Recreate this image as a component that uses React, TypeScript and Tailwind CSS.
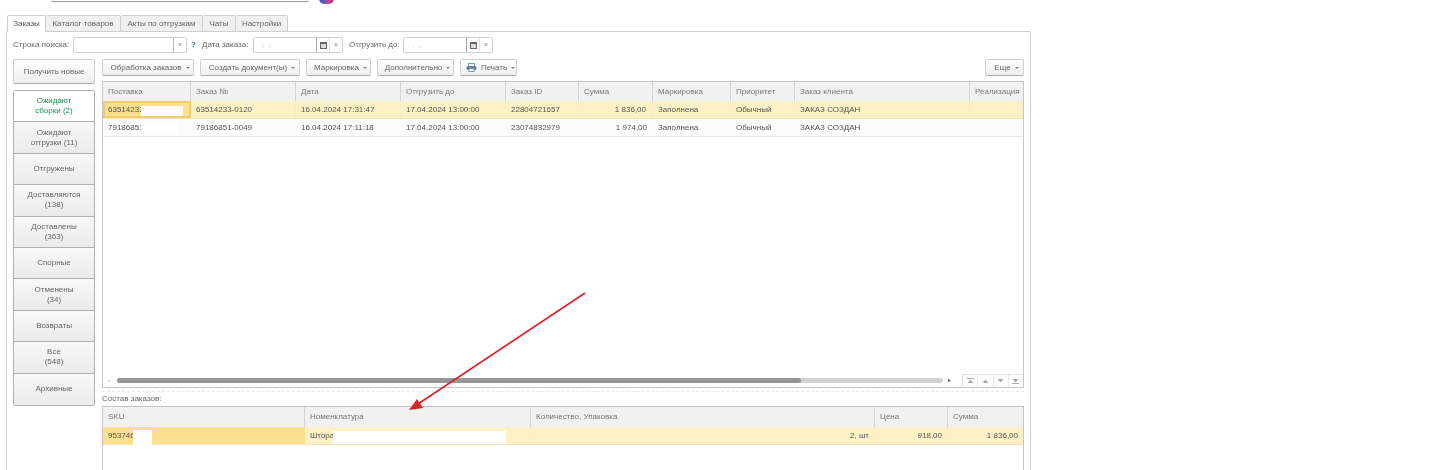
import { FC, ReactNode } from 'react'

const tabs = [
  { name: 'Заказы', w: 'w-[39px]', active: true },
  { name: 'Каталог товаров', w: 'w-[75px]' },
  { name: 'Акты по отгрузкам', w: 'w-[82px]' },
  { name: 'Чаты', w: 'w-[33px]' },
  { name: 'Настройки', w: 'w-[52px]' },
]

const sideItems = [
  ['Ожидают', 'сборки (2)'],
  ['Ожидают', 'отгрузки (11)'],
  ['Отгружены'],
  ['Доставляются', '(138)'],
  ['Доставлены', '(363)'],
  ['Спорные'],
  ['Отменены', '(34)'],
  ['Возвраты'],
  ['Все', '(548)'],
  ['Архивные'],
]

const orderCols = [
  { name: 'Поставка', w: 'w-[88px]' },
  { name: 'Заказ №', w: 'w-[105px]' },
  { name: 'Дата', w: 'w-[105px]' },
  { name: 'Отгрузить до', w: 'w-[105px]' },
  { name: 'Заказ ID', w: 'w-[73px]' },
  { name: 'Сумма', w: 'w-[74px]', right: true },
  { name: 'Маркировка', w: 'w-[78px]' },
  { name: 'Приоритет', w: 'w-[64px]' },
  { name: 'Заказ клиента', w: 'w-[175px]' },
  { name: 'Реализация', w: 'flex-1' },
]

const orders = [
  ['63514233', '63514233-0120', '16.04.2024 17:31:47', '17.04.2024 13:00:00', '22804721657', '1 836,00', 'Заполнена', 'Обычный', 'ЗАКАЗ СОЗДАН', ''],
  ['79186851', '79186851-0049', '16.04.2024 17:11:18', '17.04.2024 13:00:00', '23074832979', '1 974,00', 'Заполнена', 'Обычный', 'ЗАКАЗ СОЗДАН', ''],
]

const itemCols = [
  { name: 'SKU', w: 'w-[202px]' },
  { name: 'Номенклатура', w: 'w-[226px]' },
  { name: 'Количество, Упаковка', w: 'w-[344px]' },
  { name: 'Цена', w: 'w-[73px]' },
  { name: 'Сумма', w: 'flex-1' },
]

const Caret = () => (
  <span className="ml-[4px] mb-[-1px] inline-block border-x-[2px] border-t-[2px] border-x-transparent border-t-[#888]" />
)

const ToolButton: FC<{ w: string; children: ReactNode }> = ({ w, children }) => (
  <div className={`${w} flex h-[17px] items-center justify-center rounded-[2px] border border-[#cfcfcf] border-b-[#acacac] bg-gradient-to-b from-white to-[#eeeeee] pl-[4px] text-[8px] text-[#666]`}>
    {children}
    <Caret />
  </div>
)

const ClearBtn: FC<{ w?: string }> = ({ w = 'w-[14px]' }) => (
  <div className={`${w} flex items-center justify-center text-[7px] text-[#888]`}>×</div>
)

const CalendarIcon = () => (
  <div className="flex h-full w-[14px] items-center justify-center border-l border-l-[#aaaaaa] border-r border-r-[#e2e2e2]">
    <svg width="7" height="7" viewBox="0 0 7 7">
      <rect x="0.5" y="0.5" width="6" height="6" fill="#ddd" stroke="#666" />
      <rect x="0" y="0" width="7" height="2" fill="#666" />
    </svg>
  </div>
)

const DateField: FC<{ w: string }> = ({ w }) => (
  <div className={`${w} flex h-[16px] items-center rounded-[2px] border border-[#cfcfcf] bg-white text-[8px] text-[#777]`}>
    <span className="flex-1 pl-[8px] tracking-[1px]">. .</span>
    <CalendarIcon />
    <ClearBtn w="w-[12px]" />
  </div>
)

const HeaderCell: FC<{ name: string; w: string; last?: boolean }> = ({ name, w, last }) => (
  <div className={`${w} flex h-full items-center overflow-hidden whitespace-nowrap bg-[#f1f1f1] pl-[5px] text-[8px] text-[#777] ${last ? '' : 'border-r border-[#d4d4d4]'}`}>
    {name}
  </div>
)

const NavIcon: FC<{ up: boolean; bar: boolean }> = ({ up, bar }) => (
  <svg width="7" height="6" viewBox="0 0 7 6" fill="#a8a8a8">
    {bar && <rect x="0" y={up ? 0 : 5} width="7" height="1" />}
    <polygon points={up ? '3.5,1.5 6.5,5 0.5,5' : '0.5,1 6.5,1 3.5,4.5'} />
  </svg>
)

const OrdersTable = () => (
  <div className="relative h-[307px] w-[922px] border border-[#c6c6c6] bg-white">
    <div className="flex h-[19px]">
      {orderCols.map((c, i) => (
        <HeaderCell key={c.name} name={c.name} w={c.w} last={i === orderCols.length - 1} />
      ))}
    </div>
    {orders.map((row, r) => (
      <div key={row[1]} className={`flex h-[18px] border-b ${r === 0 ? 'border-[#f0e4b8] bg-[#fdf1c5]' : 'border-[#e8e8e8] bg-[#fbfbfb]'}`}>
        {row.map((v, i) => {
          const selected = i === 0 && r === 0
          return (
            <div
              key={i}
              className={`${orderCols[i].w} relative flex items-center overflow-hidden whitespace-nowrap text-[8px] text-[#555] ${selected ? 'pl-[3px]' : 'pl-[5px] pt-[1px]'} ${orderCols[i].right ? 'justify-end pr-[6px]' : 'pr-[5px]'} ${selected ? 'border-2 border-[#f2cb70] bg-[#fde08e]' : r === 0 ? 'border-r border-[#f8eccb]' : ''}`}
            >
              {v}
              {i === 0 && <span className={`absolute top-[3px] h-[12px] bg-white ${r === 0 ? 'left-[36px] w-[42px]' : 'left-[38px] w-[37px]'}`} />}
            </div>
          )
        })}
      </div>
    ))}
    {/* scroll and row nav */}
    <div className="absolute inset-x-0 bottom-0 flex h-[13px] items-center">
      <span className="ml-[5px] w-[9px] text-[6px] text-[#999]">‹</span>
      <div className="h-[5px] w-[826px] rounded-full bg-[#d3d3d3]">
        <div className="h-full w-[684px] rounded-full bg-[#969696]" />
      </div>
      <span className="ml-[5px] flex-1 text-[6px] text-[#555]">▸</span>
      <div className="flex h-full w-[61px] border-t border-l border-[#e2e2e2]">
        {[
          { up: true, bar: true },
          { up: true, bar: false },
          { up: false, bar: false },
          { up: false, bar: true },
        ].map((n, i) => (
          <span key={i} className="flex flex-1 items-center justify-center border-r border-[#e8e8e8] last:border-r-0">
            <NavIcon up={n.up} bar={n.bar} />
          </span>
        ))}
      </div>
    </div>
  </div>
)

const ItemsTable = () => (
  <div className="h-[70px] w-[922px] border border-b-0 border-[#c6c6c6] bg-white">
    <div className="flex h-[20px]">
      {itemCols.map((c, i) => (
        <HeaderCell key={c.name} name={c.name} w={c.w} last={i === itemCols.length - 1} />
      ))}
    </div>
    <div className="flex h-[18px] border-b border-[#f0e4b8] bg-[#fdf1c5] text-[8px] text-[#555]">
      <div className="relative flex w-[202px] items-center bg-[#fde08e] pl-[5px]">
        953746
        <span className="absolute left-[30px] top-[3px] h-[17px] w-[19px] bg-white" />
      </div>
      <div className="relative flex w-[226px] items-center border-r border-[#f8eccb] pl-[5px]">
        Штора
        <span className="absolute left-[28px] top-[4px] h-[13px] w-[173px] bg-white" />
      </div>
      <div className="flex w-[344px] items-center justify-end border-r border-[#f8eccb] pr-[5px]">2, шт</div>
      <div className="flex w-[73px] items-center justify-end border-r border-[#f8eccb] pr-[5px]">918,00</div>
      <div className="flex flex-1 items-center justify-end pr-[5px]">1 836,00</div>
    </div>
  </div>
)

export default function App() {
  return (
    <div className="relative h-[470px] w-[1429px] overflow-hidden bg-white font-['Liberation_Sans',Arial,sans-serif] blur-[0.4px]">
      {/* cut off search box at the very top */}
      <div className="flex h-[15px] items-start">
        <div className="ml-[51px] h-[2px] w-[258px] rounded-b-[2px] border-b border-[#9a9a9a]" />
        <div className="ml-[10px] mt-[-7px] h-[11px] w-[15px] rounded-full bg-gradient-to-r from-[#1e4fd0] to-[#e0245e]" />
      </div>

      <div className="ml-[7px] flex h-[17px]">
        {tabs.map((t) => (
          <div
            key={t.name}
            className={`${t.w} z-10 flex items-center justify-center whitespace-nowrap rounded-t-[2px] border border-l-0 border-[#cfcfcf] text-[8px] first:border-l ${t.active ? 'border-b-white bg-white text-[#555]' : 'bg-[#f0f0f0] text-[#666]'}`}
          >
            {t.name}
          </div>
        ))}
      </div>

      <div className="ml-[6px] mt-[-1px] h-[440px] w-[1025px] border border-[#cfcfcf] bg-white pl-[6px] pt-[5px]">
        {/* filters */}
        <div className="flex h-[16px] items-center text-[8px] text-[#666]">
          <span className="w-[60px] whitespace-nowrap">Строка поиска:</span>
          <div className="flex h-full w-[114px] items-center rounded-[2px] border border-[#cfcfcf] bg-white">
            <span className="flex-1" />
            <div className="h-full border-l border-[#bbbbbb]" />
            <ClearBtn w="w-[12px]" />
          </div>
          <span className="ml-[4px] w-[11px] font-bold text-[#2a7fb8]">?</span>
          <span className="w-[51px] whitespace-nowrap">Дата заказа:</span>
          <DateField w="w-[90px]" />
          <span className="ml-[6px] w-[54px] whitespace-nowrap">Отгрузить до:</span>
          <DateField w="w-[90px]" />
        </div>

        <div className="mt-[6px] flex gap-[7px]">
          {/* left column */}
          <div className="w-[82px]">
            <div className="flex h-[25px] items-center justify-center rounded-[2px] border border-[#cfcfcf] border-b-[#acacac] bg-gradient-to-b from-white to-[#eeeeee] text-[8px] text-[#666]">
              Получить новые
            </div>
            <div className="mt-[6px] overflow-hidden rounded-[2px] border border-[#b0b0b0]">
              {sideItems.map((lines, i) => (
                <div
                  key={lines.join()}
                  className={`flex h-[31.4px] flex-col items-center justify-center border-b border-[#b0b0b0] text-[8px] leading-[10px] last:border-b-0 ${i === 0 ? 'bg-white text-[#1f8a55]' : 'bg-gradient-to-b from-[#f8f8f8] to-[#ebebeb] text-[#666]'}`}
                >
                  {lines.map((l) => (
                    <span key={l}>{l}</span>
                  ))}
                </div>
              ))}
            </div>
          </div>

          {/* main column */}
          <div className="w-[922px]">
            <div className="flex h-[17px]">
              <ToolButton w="w-[92px] mr-[6px]">Обработка заказов</ToolButton>
              <ToolButton w="w-[100px] mr-[6px]">Создать документ(ы)</ToolButton>
              <ToolButton w="w-[65px] mr-[6px]">Маркировка</ToolButton>
              <ToolButton w="w-[77px] mr-[6px]">Дополнительно</ToolButton>
              <ToolButton w="w-[57px]">
                <svg className="mr-[4px]" width="11" height="9" viewBox="0 0 11 9">
                  <rect x="2.5" y="0.5" width="6" height="3" fill="#fff" stroke="#5f87a8" strokeWidth="0.8" />
                  <rect x="0.5" y="3" width="10" height="4" rx="1.5" fill="#5f87a8" />
                  <rect x="3" y="5.5" width="5" height="3" fill="#fff" stroke="#5f87a8" strokeWidth="0.8" />
                </svg>
                Печать
              </ToolButton>
              <div className="flex-1" />
              <ToolButton w="w-[39px]">Еще</ToolButton>
            </div>
            <div className="mt-[5px]">
              <OrdersTable />
            </div>
            <div className="mt-[3px] border-t border-dashed border-[#e8e8e8]">
              <div className="flex h-[14px] items-center text-[8px] text-[#666]">Состав заказов:</div>
            </div>
            <ItemsTable />
          </div>
        </div>
      </div>

      {/* red annotation arrow */}
      <svg className="absolute left-0 top-0" width="1429" height="470" viewBox="0 0 1429 470" fill="none">
        <line x1="585" y1="293" x2="418" y2="404" stroke="#d8232a" strokeWidth="1.8" />
        <polygon points="409,410 417,399 423,408" fill="#d8232a" />
      </svg>
    </div>
  )
}
